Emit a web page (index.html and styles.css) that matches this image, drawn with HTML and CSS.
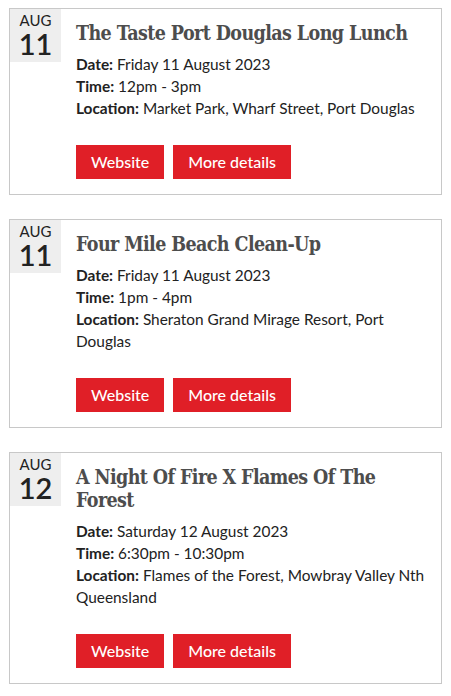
FILE: index.html
```html
<!DOCTYPE html>
<html>
<head>
<meta charset="utf-8">
<link rel="stylesheet" href="styles.css">
</head>
<body>
<div class="list">
  <div class="event">
    <div class="date"><span class="mon">AUG</span><span class="day">11</span></div>
    <div class="content">
      <h2 class="title">The Taste Port Douglas Long Lunch</h2>
      <div class="info"><b>Date:</b> Friday 11 August 2023</div>
      <div class="info"><b>Time:</b> 12pm - 3pm</div>
      <div class="info"><b>Location:</b> Market Park, Wharf Street, Port Douglas</div>
      <div class="buttons"><a class="btn">Website</a><a class="btn">More details</a></div>
    </div>
  </div>
  <div class="event">
    <div class="date"><span class="mon">AUG</span><span class="day">11</span></div>
    <div class="content">
      <h2 class="title">Four Mile Beach Clean-Up</h2>
      <div class="info"><b>Date:</b> Friday 11 August 2023</div>
      <div class="info"><b>Time:</b> 1pm - 4pm</div>
      <div class="info"><b>Location:</b> Sheraton Grand Mirage Resort, Port Douglas</div>
      <div class="buttons"><a class="btn">Website</a><a class="btn">More details</a></div>
    </div>
  </div>
  <div class="event">
    <div class="date"><span class="mon">AUG</span><span class="day">12</span></div>
    <div class="content">
      <h2 class="title">A Night Of Fire X Flames Of The Forest</h2>
      <div class="info"><b>Date:</b> Saturday 12 August 2023</div>
      <div class="info"><b>Time:</b> 6:30pm - 10:30pm</div>
      <div class="info"><b>Location:</b> Flames of the Forest, Mowbray Valley Nth Queensland</div>
      <div class="buttons"><a class="btn">Website</a><a class="btn">More details</a></div>
    </div>
  </div>
</div>
</body>
</html>
```
FILE: styles.css
```css
* { box-sizing: border-box; }
html, body { margin: 0; padding: 0; background: #fff; }
body { font-family: Lato, "Open Sans", sans-serif; color: #222; }
.list { display: flex; flex-direction: column; gap: 24px; padding: 8px 9px 0 9px; }
.event { display: flex; border: 1px solid #c8c8c8; }
.date { width: 51px; height: 53px; background: #eeeeee; display: flex; flex-direction: column; align-items: center; flex-shrink: 0; padding-top: 3px; }
.mon { font-size: 15px; line-height: 17px; font-weight: 400; }
.day { font-size: 29px; line-height: 29px; font-weight: 600; }
.content { flex: 1; padding: 13px 12px 15px 15px; }
.title { margin: 0 0 8px; font-family: "DejaVu Serif Condensed", "DejaVu Serif", serif; font-stretch: condensed; font-weight: bold; font-size: 19.5px; line-height: 23px; color: #4d4d4d; letter-spacing: -0.6px; }
.info { font-size: 15.4px; line-height: 22px; }
.info b { font-weight: 700; }
.buttons { display: flex; gap: 9px; margin-top: 26px; }
.btn { display: block; background: #e01f27; color: #fff; font-size: 16px; font-weight: 500; line-height: 34px; height: 34px; padding: 0 15px; }
```
